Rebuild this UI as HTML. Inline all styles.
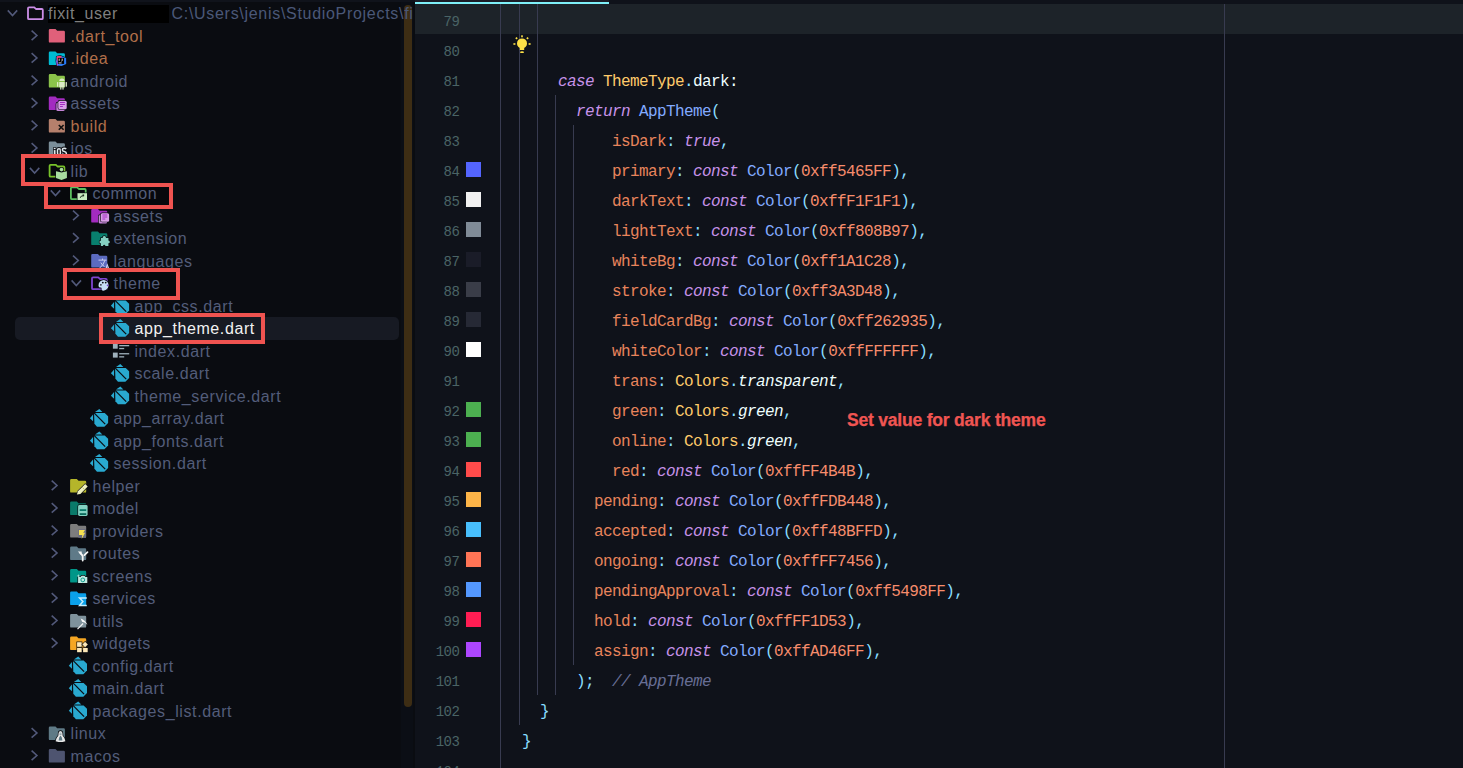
<!DOCTYPE html>
<html><head><meta charset="utf-8"><style>
*{margin:0;padding:0;box-sizing:border-box}
html,body{width:1463px;height:768px;overflow:hidden;background:#0f121a}
#side{position:absolute;left:0;top:0;width:415px;height:768px;background:#0a0c11;overflow:hidden}
#side:before{content:"";position:absolute;left:0;top:0;width:415px;height:2px;background:#10131b;z-index:6}
#topstrip{position:absolute;left:0;top:0;width:1463px;height:2px;background:#10131b}
.t{position:absolute;font-family:"Liberation Sans",sans-serif;font-size:16px;line-height:20px;letter-spacing:0.6px;white-space:nowrap}
.chev,.ic{position:absolute}
.sel{position:absolute;left:15px;width:384px;height:23px;background:#171a23;border-radius:5px}
.rb{position:absolute;border:4px solid #ef5350}
#sb{position:absolute;left:404px;top:5px;width:8px;height:702px;background:#3d2d14;border-radius:4px}
#ed{position:absolute;left:415px;top:0;width:1048px;height:768px;background:#0f121a;overflow:hidden}
.g{position:absolute;width:1px;background:#383b50}
.ln{position:absolute;left:0;width:44.2px;text-align:right;font-family:"Liberation Mono",monospace;font-size:14px;letter-spacing:-0.6px;line-height:30px;color:#4a6466;padding-top:3px}
.sw{position:absolute;left:51px;width:15px;height:15px}
.cl{position:absolute;font-family:"Liberation Mono",monospace;font-size:16px;letter-spacing:-0.6px;line-height:30px;white-space:pre;color:#eeffff;padding-top:3px}
.note{position:absolute;left:432px;top:409px;font-family:"Liberation Sans",sans-serif;font-weight:bold;font-size:17.5px;letter-spacing:-0.2px;line-height:22px;color:#f05552;white-space:nowrap;-webkit-text-stroke:0.25px #f05552}
</style></head><body>
<div id="side">
<div style="position:absolute;left:67px;top:272px;width:109px;height:24px;background:#07080c"></div>
<div style="position:absolute;left:48px;top:187px;width:121px;height:17.5px;background:#07080c"></div>
<div style="position:absolute;left:25px;top:158px;width:77px;height:24px;background:#07080c"></div>
<svg class="chev" style="left:6px;top:8px" width="14" height="11" viewBox="0 0 14 11"><path transform="translate(0.00,0.60)" d="M1.8 1.8 L6.5 6.9 L11.2 1.8" fill="none" stroke="#52597a" stroke-width="1.6"/></svg>
<svg class="ic" style="left:25px;top:3px" width="23" height="21" viewBox="0 0 23 21"><g transform="translate(0.00,0.60)"><path d="M3 4.7 Q3 3.7 4 3.7 H9.3 L10.9 5.4 H16.8 Q17.8 5.4 17.8 6.4 V14.6 Q17.8 15.6 16.8 15.6 H4 Q3 15.6 3 14.6 Z" fill="none" stroke="#cc8ee8" stroke-width="1.8" stroke-linejoin="round"/></g></svg>
<div style="position:absolute;left:48px;top:5px;width:121px;height:18px;background:#000"></div>
<div class="t" style="left:48px;top:4.1px;color:#7f7f7f">fixit_user</div>
<div class="t" style="left:171.5px;top:4.1px;color:#4a5878;width:241px;overflow:hidden;white-space:nowrap;z-index:5;letter-spacing:0.7px">C:\Users\jenis\StudioProjects\fixit_user</div>
<svg class="chev" style="left:30px;top:30px" width="10" height="13" viewBox="0 0 10 13"><path transform="translate(0.60,0.10)" d="M1.0 0.6 L6.3 5.4 L1.0 10.1" fill="none" stroke="#52597a" stroke-width="1.6"/></svg>
<svg class="ic" style="left:46px;top:26px" width="23" height="21" viewBox="0 0 23 21"><g transform="translate(0.60,0.10)"><path d="M2.2 4.2 Q2.2 3.0 3.4 3.0 H8.9 L10.6 4.7 H17.1 Q18.3 4.7 18.3 5.9 V15.3 Q18.3 16.5 17.1 16.5 H3.4 Q2.2 16.5 2.2 15.3 Z" fill="#e0607a"/></g></svg>
<div class="t" style="left:70.5px;top:26.6px;color:#b06f4a">.dart_tool</div>
<svg class="chev" style="left:30px;top:52px" width="10" height="13" viewBox="0 0 10 13"><path transform="translate(0.60,0.60)" d="M1.0 0.6 L6.3 5.4 L1.0 10.1" fill="none" stroke="#52597a" stroke-width="1.6"/></svg>
<svg class="ic" style="left:46px;top:48px" width="23" height="21" viewBox="0 0 23 21"><g transform="translate(0.60,0.60)"><path d="M2.2 4.2 Q2.2 3.0 3.4 3.0 H8.9 L10.6 4.7 H17.1 Q18.3 4.7 18.3 5.9 V15.3 Q18.3 16.5 17.1 16.5 H3.4 Q2.2 16.5 2.2 15.3 Z" fill="#00bcd4"/><path d="M10 8 L13.5 7.2 L19.5 9.5 L19.6 15.5 L15 17.3 L10.3 16.8 L9.6 12 Z" fill="#2a7bf5" stroke="#0a0c11" stroke-width="1.3" paint-order="stroke"/><path d="M10 8 L13.5 7.2 L15.5 8.5 L10.6 12.5 Z" fill="#ff3a6a"/><path d="M9.6 12 L10.6 12.5 L11.5 16.9 L10.3 16.8 Z" fill="#c04ad0"/><rect x="11.3" y="9.3" width="6.2" height="6" fill="#000"/><path d="M12.6 10 V12.3 M15.6 10 V12 Q15.6 12.6 14.8 12.6 M12 14.3 H15" stroke="#fff" stroke-width="0.8" fill="none"/></g></svg>
<div class="t" style="left:70.5px;top:49.1px;color:#b06f4a">.idea</div>
<svg class="chev" style="left:30px;top:75px" width="10" height="13" viewBox="0 0 10 13"><path transform="translate(0.60,0.10)" d="M1.0 0.6 L6.3 5.4 L1.0 10.1" fill="none" stroke="#52597a" stroke-width="1.6"/></svg>
<svg class="ic" style="left:46px;top:71px" width="23" height="21" viewBox="0 0 23 21"><g transform="translate(0.60,0.10)"><path d="M2.2 4.2 Q2.2 3.0 3.4 3.0 H8.9 L10.6 4.7 H17.1 Q18.3 4.7 18.3 5.9 V15.3 Q18.3 16.5 17.1 16.5 H3.4 Q2.2 16.5 2.2 15.3 Z" fill="#8bc34a"/><path d="M12.6 10 Q12.6 7.4 15.3 7.4 Q18 7.4 18 10 Z" fill="#dcebc8"/><rect x="12.6" y="10.9" width="5.4" height="5.2" fill="#dcebc8"/><rect x="10.4" y="11" width="1.3" height="4.6" fill="#dcebc8"/><rect x="19" y="11" width="1.3" height="4.6" fill="#dcebc8"/><rect x="13.6" y="16" width="1.2" height="2.5" fill="#dcebc8"/><rect x="15.8" y="16" width="1.2" height="2.5" fill="#dcebc8"/></g></svg>
<div class="t" style="left:70.5px;top:71.6px;color:#535d7a">android</div>
<svg class="chev" style="left:30px;top:97px" width="10" height="13" viewBox="0 0 10 13"><path transform="translate(0.60,0.60)" d="M1.0 0.6 L6.3 5.4 L1.0 10.1" fill="none" stroke="#52597a" stroke-width="1.6"/></svg>
<svg class="ic" style="left:46px;top:93px" width="23" height="21" viewBox="0 0 23 21"><g transform="translate(0.60,0.60)"><path d="M2.2 4.2 Q2.2 3.0 3.4 3.0 H8.9 L10.6 4.7 H17.1 Q18.3 4.7 18.3 5.9 V15.3 Q18.3 16.5 17.1 16.5 H3.4 Q2.2 16.5 2.2 15.3 Z" fill="#a22bc0"/><rect x="9.7" y="8.9" width="8.4" height="8.6" rx="1.5" fill="#c585d8" stroke="#0a0c11" stroke-width="1.3" paint-order="stroke"/><rect x="11.7" y="7.1" width="8.4" height="8.5" rx="1.5" fill="#d99ee8" stroke="#0a0c11" stroke-width="1.3" paint-order="stroke"/><path d="M13.4 8.9 H18.3 M13.4 10.9 H18.3 M13.4 12.9 H16.3" stroke="#a22bc0" stroke-width="1"/></g></svg>
<div class="t" style="left:70.5px;top:94.1px;color:#535d7a">assets</div>
<svg class="chev" style="left:30px;top:120px" width="10" height="13" viewBox="0 0 10 13"><path transform="translate(0.60,0.10)" d="M1.0 0.6 L6.3 5.4 L1.0 10.1" fill="none" stroke="#52597a" stroke-width="1.6"/></svg>
<svg class="ic" style="left:46px;top:116px" width="23" height="21" viewBox="0 0 23 21"><g transform="translate(0.60,0.10)"><path d="M2.2 4.2 Q2.2 3.0 3.4 3.0 H8.9 L10.6 4.7 H17.1 Q18.3 4.7 18.3 5.9 V15.3 Q18.3 16.5 17.1 16.5 H3.4 Q2.2 16.5 2.2 15.3 Z" fill="#b5806c"/><path d="M12.2 8.9 L17 13.7 M17 8.9 L12.2 13.7" stroke="#111" stroke-width="1.6"/></g></svg>
<div class="t" style="left:70.5px;top:116.6px;color:#b06f4a">build</div>
<svg class="chev" style="left:30px;top:142px" width="10" height="13" viewBox="0 0 10 13"><path transform="translate(0.60,0.60)" d="M1.0 0.6 L6.3 5.4 L1.0 10.1" fill="none" stroke="#52597a" stroke-width="1.6"/></svg>
<svg class="ic" style="left:46px;top:138px" width="23" height="21" viewBox="0 0 23 21"><g transform="translate(0.60,0.60)"><path d="M2.2 4.2 Q2.2 3.0 3.4 3.0 H8.9 L10.6 4.7 H17.1 Q18.3 4.7 18.3 5.9 V15.3 Q18.3 16.5 17.1 16.5 H3.4 Q2.2 16.5 2.2 15.3 Z" fill="#7b8e99"/><path d="M6.6 9 H21 V17 H6.6 Z" fill="#0a0c11" opacity="0"/><rect x="7.2" y="9.2" width="1.8" height="1.5" fill="#dfe6ea" stroke="#0a0c11" stroke-width="1.3" paint-order="stroke"/><rect x="7.2" y="11.5" width="1.8" height="5" fill="#dfe6ea" stroke="#0a0c11" stroke-width="1.3" paint-order="stroke"/><rect x="10.9" y="10.1" width="2.9" height="6" rx="1.4" fill="none" stroke="#0a0c11" stroke-width="3.2"/><rect x="10.9" y="10.1" width="2.9" height="6" rx="1.4" fill="none" stroke="#dfe6ea" stroke-width="1.5"/><path d="M19.6 10.3 Q19 9.6 17.6 9.6 Q15.8 9.6 15.8 11.3 Q15.8 12.6 17.8 13 Q19.8 13.4 19.8 14.8 Q19.8 16.6 17.6 16.6 Q16.2 16.6 15.6 15.8" fill="none" stroke="#0a0c11" stroke-width="3.2"/><path d="M19.6 10.3 Q19 9.6 17.6 9.6 Q15.8 9.6 15.8 11.3 Q15.8 12.6 17.8 13 Q19.8 13.4 19.8 14.8 Q19.8 16.6 17.6 16.6 Q16.2 16.6 15.6 15.8" fill="none" stroke="#dfe6ea" stroke-width="1.5"/></g></svg>
<div class="t" style="left:70.5px;top:139.1px;color:#535d7a">ios</div>
<svg class="chev" style="left:28px;top:166px" width="14" height="11" viewBox="0 0 14 11"><path transform="translate(0.10,0.10)" d="M1.8 1.8 L6.5 6.9 L11.2 1.8" fill="none" stroke="#52597a" stroke-width="1.6"/></svg>
<svg class="ic" style="left:46px;top:161px" width="23" height="21" viewBox="0 0 23 21"><g transform="translate(0.60,0.10)"><path d="M3 4.7 Q3 3.7 4 3.7 H9.3 L10.9 5.4 H16.8 Q17.8 5.4 17.8 6.4 V14.6 Q17.8 15.6 16.8 15.6 H4 Q3 15.6 3 14.6 Z" fill="none" stroke="#78c22a" stroke-width="1.8" stroke-linejoin="round"/><path d="M9.4 10.2 L14.9 11.4 L20.3 10.2 V17 L14.9 18.9 L9.4 17 Z" fill="#a8dca0" stroke="#0a0c11" stroke-width="1.3" paint-order="stroke"/><circle cx="14.9" cy="8.5" r="1.8" fill="#a8dca0" stroke="#0a0c11" stroke-width="1.3" paint-order="stroke"/></g></svg>
<div class="t" style="left:70.5px;top:161.6px;color:#535d7a">lib</div>
<svg class="chev" style="left:49px;top:188px" width="14" height="11" viewBox="0 0 14 11"><path transform="translate(0.00,0.60)" d="M1.8 1.8 L6.5 6.9 L11.2 1.8" fill="none" stroke="#52597a" stroke-width="1.6"/></svg>
<svg class="ic" style="left:67px;top:183px" width="23" height="21" viewBox="0 0 23 21"><g transform="translate(0.90,0.60)"><path d="M3 4.7 Q3 3.7 4 3.7 H9.3 L10.9 5.4 H16.8 Q17.8 5.4 17.8 6.4 V14.6 Q17.8 15.6 16.8 15.6 H4 Q3 15.6 3 14.6 Z" fill="none" stroke="#5cc060" stroke-width="1.8" stroke-linejoin="round"/><rect x="9.6" y="9.6" width="9.5" height="6.8" fill="#c8ecc0" stroke="#0a0c11" stroke-width="1.3" paint-order="stroke"/><path d="M12.3 14.2 Q13 11.8 16 11.8 M14.8 10.8 L16.2 11.8 L14.8 12.9" stroke="#1b2a1b" stroke-width="1" fill="none"/></g></svg>
<div class="t" style="left:92.4px;top:184.1px;color:#535d7a">common</div>
<svg class="chev" style="left:72px;top:210px" width="10" height="13" viewBox="0 0 10 13"><path transform="translate(0.00,0.10)" d="M1.0 0.6 L6.3 5.4 L1.0 10.1" fill="none" stroke="#52597a" stroke-width="1.6"/></svg>
<svg class="ic" style="left:89px;top:206px" width="23" height="21" viewBox="0 0 23 21"><g transform="translate(0.00,0.10)"><path d="M2.2 4.2 Q2.2 3.0 3.4 3.0 H8.9 L10.6 4.7 H17.1 Q18.3 4.7 18.3 5.9 V15.3 Q18.3 16.5 17.1 16.5 H3.4 Q2.2 16.5 2.2 15.3 Z" fill="#a22bc0"/><rect x="9.7" y="8.9" width="8.4" height="8.6" rx="1.5" fill="#c585d8" stroke="#0a0c11" stroke-width="1.3" paint-order="stroke"/><rect x="11.7" y="7.1" width="8.4" height="8.5" rx="1.5" fill="#d99ee8" stroke="#0a0c11" stroke-width="1.3" paint-order="stroke"/><path d="M13.4 8.9 H18.3 M13.4 10.9 H18.3 M13.4 12.9 H16.3" stroke="#a22bc0" stroke-width="1"/></g></svg>
<div class="t" style="left:113.4px;top:206.6px;color:#535d7a">assets</div>
<svg class="chev" style="left:72px;top:232px" width="10" height="13" viewBox="0 0 10 13"><path transform="translate(0.00,0.60)" d="M1.0 0.6 L6.3 5.4 L1.0 10.1" fill="none" stroke="#52597a" stroke-width="1.6"/></svg>
<svg class="ic" style="left:89px;top:228px" width="23" height="21" viewBox="0 0 23 21"><g transform="translate(0.00,0.60)"><path d="M2.2 4.2 Q2.2 3.0 3.4 3.0 H8.9 L10.6 4.7 H17.1 Q18.3 4.7 18.3 5.9 V15.3 Q18.3 16.5 17.1 16.5 H3.4 Q2.2 16.5 2.2 15.3 Z" fill="#087f6e"/><path d="M12 9.3 H13.6 Q13.6 7.3 15.3 7.3 Q17 7.3 17 9.3 H19.4 V12 Q20.8 12.2 20.8 13.3 Q20.8 14.4 19.4 14.6 V17.5 H16.4 Q16.3 16.2 15.2 16.2 Q14.1 16.2 14 17.5 H11.9 V14.6 Q10.4 14.6 10.4 13.4 Q10.4 12.2 11.9 12.1 Z" fill="#85d0c2" stroke="#0a0c11" stroke-width="1.3" paint-order="stroke"/></g></svg>
<div class="t" style="left:113.4px;top:229.1px;color:#535d7a">extension</div>
<svg class="chev" style="left:72px;top:255px" width="10" height="13" viewBox="0 0 10 13"><path transform="translate(0.00,0.10)" d="M1.0 0.6 L6.3 5.4 L1.0 10.1" fill="none" stroke="#52597a" stroke-width="1.6"/></svg>
<svg class="ic" style="left:89px;top:251px" width="23" height="21" viewBox="0 0 23 21"><g transform="translate(0.00,0.10)"><path d="M2.2 4.2 Q2.2 3.0 3.4 3.0 H8.9 L10.6 4.7 H17.1 Q18.3 4.7 18.3 5.9 V15.3 Q18.3 16.5 17.1 16.5 H3.4 Q2.2 16.5 2.2 15.3 Z" fill="#5c6bc0"/><path d="M9.5 9 H17.6 M13.5 7.5 V9 M16 9 Q14.5 14 10.6 17 M11.8 11.5 Q13.5 14.5 15.5 15.5" stroke="#c9cdf0" stroke-width="1" fill="none"/><path d="M16.5 18.5 L18.3 13.8 L20.1 18.5 M17.1 17 H19.5" stroke="#c9cdf0" stroke-width="1.1" fill="none"/></g></svg>
<div class="t" style="left:113.4px;top:251.6px;color:#535d7a">languages</div>
<svg class="chev" style="left:69px;top:278px" width="14" height="11" viewBox="0 0 14 11"><path transform="translate(0.80,0.60)" d="M1.8 1.8 L6.5 6.9 L11.2 1.8" fill="none" stroke="#52597a" stroke-width="1.6"/></svg>
<svg class="ic" style="left:89px;top:273px" width="23" height="21" viewBox="0 0 23 21"><g transform="translate(0.00,0.60)"><path d="M3 4.7 Q3 3.7 4 3.7 H9.3 L10.9 5.4 H16.8 Q17.8 5.4 17.8 6.4 V14.6 Q17.8 15.6 16.8 15.6 H4 Q3 15.6 3 14.6 Z" fill="none" stroke="#7e45d0" stroke-width="1.8" stroke-linejoin="round"/><path d="M14.9 6.3 A5.4 5.4 0 1 1 13.4 17 Q11.8 16.2 12.6 15 Q13 14 11.5 14 Q9.5 14 9.5 11.8 A5.4 5.4 0 0 1 14.9 6.3 Z" fill="#c8e0f6" stroke="#0a0c11" stroke-width="1.3" paint-order="stroke"/><circle cx="13.8" cy="9" r="0.9" fill="#111"/><circle cx="16.7" cy="9" r="0.9" fill="#111"/><circle cx="11.9" cy="11.2" r="0.9" fill="#333"/><circle cx="18.6" cy="11.7" r="0.9" fill="#7e45d0"/></g></svg>
<div class="t" style="left:113.4px;top:274.1px;color:#535d7a">theme</div>
<svg class="ic" style="left:110px;top:296px" width="23" height="21" viewBox="0 0 23 21"><g transform="translate(0.00,0.10)"><path d="M10.34 0.3 L13.4 3.3 H6.0 Z" fill="#29a9d0"/><path d="M5.1 4.3 H15.7 L19.1 7.7 V14.5 L15.4 18.1 H8 L5.4 15.2 Z" fill="#29a9d0"/><path d="M4.8 4.0 L16.2 15.5" stroke="#0a0c11" stroke-width="1.25"/><path d="M0.9 9.7 L4.05 5.8 V12.6 Z" fill="#29a9d0"/></g></svg>
<div class="t" style="left:134.4px;top:296.6px;color:#535d7a">app_css.dart</div>
<div class="sel" style="top:316.5px"></div>
<svg class="ic" style="left:110px;top:318px" width="23" height="21" viewBox="0 0 23 21"><g transform="translate(0.00,0.60)"><path d="M10.34 0.3 L13.4 3.3 H6.0 Z" fill="#29a9d0"/><path d="M5.1 4.3 H15.7 L19.1 7.7 V14.5 L15.4 18.1 H8 L5.4 15.2 Z" fill="#29a9d0"/><path d="M4.8 4.0 L16.2 15.5" stroke="#0a0c11" stroke-width="1.25"/><path d="M0.9 9.7 L4.05 5.8 V12.6 Z" fill="#29a9d0"/></g></svg>
<div class="t" style="left:134.4px;top:319.1px;color:#f2f2f2">app_theme.dart</div>
<svg class="ic" style="left:110px;top:341px" width="23" height="21" viewBox="0 0 23 21"><g transform="translate(0.00,0.10)"><rect x="2.9" y="2.4" width="4.8" height="5.2" fill="#9eb0bb"/><rect x="2.9" y="11.5" width="4.8" height="5" fill="#9eb0bb"/><rect x="9.2" y="3.9" width="10" height="1.3" fill="#9eb0bb"/><rect x="9.2" y="6.8" width="5" height="1.3" fill="#9eb0bb"/><rect x="9.2" y="12" width="10" height="1.3" fill="#9eb0bb"/><rect x="9.2" y="15.1" width="5" height="1.3" fill="#9eb0bb"/></g></svg>
<div class="t" style="left:134.4px;top:341.6px;color:#535d7a">index.dart</div>
<svg class="ic" style="left:110px;top:363px" width="23" height="21" viewBox="0 0 23 21"><g transform="translate(0.00,0.60)"><path d="M10.34 0.3 L13.4 3.3 H6.0 Z" fill="#29a9d0"/><path d="M5.1 4.3 H15.7 L19.1 7.7 V14.5 L15.4 18.1 H8 L5.4 15.2 Z" fill="#29a9d0"/><path d="M4.8 4.0 L16.2 15.5" stroke="#0a0c11" stroke-width="1.25"/><path d="M0.9 9.7 L4.05 5.8 V12.6 Z" fill="#29a9d0"/></g></svg>
<div class="t" style="left:134.4px;top:364.1px;color:#535d7a">scale.dart</div>
<svg class="ic" style="left:110px;top:386px" width="23" height="21" viewBox="0 0 23 21"><g transform="translate(0.00,0.10)"><path d="M10.34 0.3 L13.4 3.3 H6.0 Z" fill="#29a9d0"/><path d="M5.1 4.3 H15.7 L19.1 7.7 V14.5 L15.4 18.1 H8 L5.4 15.2 Z" fill="#29a9d0"/><path d="M4.8 4.0 L16.2 15.5" stroke="#0a0c11" stroke-width="1.25"/><path d="M0.9 9.7 L4.05 5.8 V12.6 Z" fill="#29a9d0"/></g></svg>
<div class="t" style="left:134.4px;top:386.6px;color:#535d7a">theme_service.dart</div>
<svg class="ic" style="left:89px;top:408px" width="23" height="21" viewBox="0 0 23 21"><g transform="translate(0.00,0.60)"><path d="M10.34 0.3 L13.4 3.3 H6.0 Z" fill="#29a9d0"/><path d="M5.1 4.3 H15.7 L19.1 7.7 V14.5 L15.4 18.1 H8 L5.4 15.2 Z" fill="#29a9d0"/><path d="M4.8 4.0 L16.2 15.5" stroke="#0a0c11" stroke-width="1.25"/><path d="M0.9 9.7 L4.05 5.8 V12.6 Z" fill="#29a9d0"/></g></svg>
<div class="t" style="left:113.4px;top:409.1px;color:#535d7a">app_array.dart</div>
<svg class="ic" style="left:89px;top:431px" width="23" height="21" viewBox="0 0 23 21"><g transform="translate(0.00,0.10)"><path d="M10.34 0.3 L13.4 3.3 H6.0 Z" fill="#29a9d0"/><path d="M5.1 4.3 H15.7 L19.1 7.7 V14.5 L15.4 18.1 H8 L5.4 15.2 Z" fill="#29a9d0"/><path d="M4.8 4.0 L16.2 15.5" stroke="#0a0c11" stroke-width="1.25"/><path d="M0.9 9.7 L4.05 5.8 V12.6 Z" fill="#29a9d0"/></g></svg>
<div class="t" style="left:113.4px;top:431.6px;color:#535d7a">app_fonts.dart</div>
<svg class="ic" style="left:89px;top:453px" width="23" height="21" viewBox="0 0 23 21"><g transform="translate(0.00,0.60)"><path d="M10.34 0.3 L13.4 3.3 H6.0 Z" fill="#29a9d0"/><path d="M5.1 4.3 H15.7 L19.1 7.7 V14.5 L15.4 18.1 H8 L5.4 15.2 Z" fill="#29a9d0"/><path d="M4.8 4.0 L16.2 15.5" stroke="#0a0c11" stroke-width="1.25"/><path d="M0.9 9.7 L4.05 5.8 V12.6 Z" fill="#29a9d0"/></g></svg>
<div class="t" style="left:113.4px;top:454.1px;color:#535d7a">session.dart</div>
<svg class="chev" style="left:50px;top:480px" width="10" height="13" viewBox="0 0 10 13"><path transform="translate(0.70,0.10)" d="M1.0 0.6 L6.3 5.4 L1.0 10.1" fill="none" stroke="#52597a" stroke-width="1.6"/></svg>
<svg class="ic" style="left:67px;top:476px" width="23" height="21" viewBox="0 0 23 21"><g transform="translate(0.90,0.10)"><path d="M2.2 4.2 Q2.2 3.0 3.4 3.0 H8.9 L10.6 4.7 H17.1 Q18.3 4.7 18.3 5.9 V15.3 Q18.3 16.5 17.1 16.5 H3.4 Q2.2 16.5 2.2 15.3 Z" fill="#b5b52a"/><path d="M9 18.5 L10 15.2 L17.3 8 L19.8 10.5 L12.5 17.8 Z" fill="#eef0c0" stroke="#0a0c11" stroke-width="1.3" paint-order="stroke"/><path d="M14.6 11.4 L16.3 13.1" stroke="#b5b52a" stroke-width="0.6"/></g></svg>
<div class="t" style="left:92.4px;top:476.6px;color:#535d7a">helper</div>
<svg class="chev" style="left:50px;top:502px" width="10" height="13" viewBox="0 0 10 13"><path transform="translate(0.70,0.60)" d="M1.0 0.6 L6.3 5.4 L1.0 10.1" fill="none" stroke="#52597a" stroke-width="1.6"/></svg>
<svg class="ic" style="left:67px;top:498px" width="23" height="21" viewBox="0 0 23 21"><g transform="translate(0.90,0.60)"><path d="M2.2 4.2 Q2.2 3.0 3.4 3.0 H8.9 L10.6 4.7 H17.1 Q18.3 4.7 18.3 5.9 V15.3 Q18.3 16.5 17.1 16.5 H3.4 Q2.2 16.5 2.2 15.3 Z" fill="#0a7a6a"/><rect x="10.2" y="6.4" width="9.5" height="11" rx="1.4" fill="#84d2c3" stroke="#0a0c11" stroke-width="1.3" paint-order="stroke"/><rect x="11.8" y="10.6" width="6.5" height="1.8" fill="#0a7a6a"/><rect x="11.8" y="14.6" width="6.5" height="1.8" fill="#0a6a5c"/></g></svg>
<div class="t" style="left:92.4px;top:499.1px;color:#535d7a">model</div>
<svg class="chev" style="left:50px;top:525px" width="10" height="13" viewBox="0 0 10 13"><path transform="translate(0.70,0.10)" d="M1.0 0.6 L6.3 5.4 L1.0 10.1" fill="none" stroke="#52597a" stroke-width="1.6"/></svg>
<svg class="ic" style="left:67px;top:521px" width="23" height="21" viewBox="0 0 23 21"><g transform="translate(0.90,0.10)"><path d="M2.2 4.2 Q2.2 3.0 3.4 3.0 H8.9 L10.6 4.7 H17.1 Q18.3 4.7 18.3 5.9 V15.3 Q18.3 16.5 17.1 16.5 H3.4 Q2.2 16.5 2.2 15.3 Z" fill="#7d7d7d"/><rect x="10.5" y="8.2" width="7.6" height="8.5" fill="#6a6d80"/><path d="M11.1 8.8 H17.1 L15.3 11.6 H17.2 L13.8 18 L14.4 13.8 H11.1 Z" fill="#f5e050"/></g></svg>
<div class="t" style="left:92.4px;top:521.6px;color:#535d7a">providers</div>
<svg class="chev" style="left:50px;top:547px" width="10" height="13" viewBox="0 0 10 13"><path transform="translate(0.70,0.60)" d="M1.0 0.6 L6.3 5.4 L1.0 10.1" fill="none" stroke="#52597a" stroke-width="1.6"/></svg>
<svg class="ic" style="left:67px;top:543px" width="23" height="21" viewBox="0 0 23 21"><g transform="translate(0.90,0.60)"><path d="M2.2 4.2 Q2.2 3.0 3.4 3.0 H8.9 L10.6 4.7 H17.1 Q18.3 4.7 18.3 5.9 V15.3 Q18.3 16.5 17.1 16.5 H3.4 Q2.2 16.5 2.2 15.3 Z" fill="#5f7a88"/><path d="M14.8 17 V13 Q14.8 11.5 12.5 9.6" stroke="#f4f4f4" stroke-width="1.8" fill="none" stroke-linecap="round"/><path d="M9.9 8 H13.8 V11.9 Z" fill="#f4f4f4"/><path d="M16.5 11.5 L19.6 8.6" stroke="#f4f4f4" stroke-width="1.8" stroke-linecap="round"/></g></svg>
<div class="t" style="left:92.4px;top:544.1px;color:#535d7a">routes</div>
<svg class="chev" style="left:50px;top:570px" width="10" height="13" viewBox="0 0 10 13"><path transform="translate(0.70,0.10)" d="M1.0 0.6 L6.3 5.4 L1.0 10.1" fill="none" stroke="#52597a" stroke-width="1.6"/></svg>
<svg class="ic" style="left:67px;top:566px" width="23" height="21" viewBox="0 0 23 21"><g transform="translate(0.90,0.10)"><path d="M2.2 4.2 Q2.2 3.0 3.4 3.0 H8.9 L10.6 4.7 H17.1 Q18.3 4.7 18.3 5.9 V15.3 Q18.3 16.5 17.1 16.5 H3.4 Q2.2 16.5 2.2 15.3 Z" fill="#009688"/><path d="M10.2 10.9 H12.6 L13.7 9.6 H16.5 L17.6 10.9 H19.4 V17 H10.2 Z" fill="#bfe8e0" stroke="#0a0c11" stroke-width="1.3" paint-order="stroke"/><circle cx="14.9" cy="13.8" r="1.9" fill="none" stroke="#009688" stroke-width="0.9"/><path d="M10.5 8 L11 9.4 L12.3 9.9 L11 10.4 L10.5 11.8 L10 10.4 L8.7 9.9 L10 9.4 Z" fill="#a8e0d6"/></g></svg>
<div class="t" style="left:92.4px;top:566.6px;color:#535d7a">screens</div>
<svg class="chev" style="left:50px;top:592px" width="10" height="13" viewBox="0 0 10 13"><path transform="translate(0.70,0.60)" d="M1.0 0.6 L6.3 5.4 L1.0 10.1" fill="none" stroke="#52597a" stroke-width="1.6"/></svg>
<svg class="ic" style="left:67px;top:588px" width="23" height="21" viewBox="0 0 23 21"><g transform="translate(0.90,0.60)"><path d="M2.2 4.2 Q2.2 3.0 3.4 3.0 H8.9 L10.6 4.7 H17.1 Q18.3 4.7 18.3 5.9 V15.3 Q18.3 16.5 17.1 16.5 H3.4 Q2.2 16.5 2.2 15.3 Z" fill="#0aa0ea"/><path d="M18.9 9.4 H11.7 L15 12.9 L11.7 16.9 H18.9" stroke="#c4eeff" stroke-width="1.5" fill="none" stroke="#0a0c11" stroke-width="1.3" paint-order="stroke"/></g></svg>
<div class="t" style="left:92.4px;top:589.1px;color:#535d7a">services</div>
<svg class="chev" style="left:50px;top:615px" width="10" height="13" viewBox="0 0 10 13"><path transform="translate(0.70,0.10)" d="M1.0 0.6 L6.3 5.4 L1.0 10.1" fill="none" stroke="#52597a" stroke-width="1.6"/></svg>
<svg class="ic" style="left:67px;top:611px" width="23" height="21" viewBox="0 0 23 21"><g transform="translate(0.90,0.10)"><path d="M2.2 4.2 Q2.2 3.0 3.4 3.0 H8.9 L10.6 4.7 H17.1 Q18.3 4.7 18.3 5.9 V15.3 Q18.3 16.5 17.1 16.5 H3.4 Q2.2 16.5 2.2 15.3 Z" fill="#7f929c"/><path d="M9.6 18 L15.2 12.4" stroke="#f4f4f4" stroke-width="1.2"/><path d="M12.8 7.3 Q17.5 9 19.6 13.8 Q17.5 11 14.2 10.6 Z" fill="#fafafa"/></g></svg>
<div class="t" style="left:92.4px;top:611.6px;color:#535d7a">utils</div>
<svg class="chev" style="left:50px;top:637px" width="10" height="13" viewBox="0 0 10 13"><path transform="translate(0.70,0.60)" d="M1.0 0.6 L6.3 5.4 L1.0 10.1" fill="none" stroke="#52597a" stroke-width="1.6"/></svg>
<svg class="ic" style="left:67px;top:633px" width="23" height="21" viewBox="0 0 23 21"><g transform="translate(0.90,0.60)"><path d="M2.2 4.2 Q2.2 3.0 3.4 3.0 H8.9 L10.6 4.7 H17.1 Q18.3 4.7 18.3 5.9 V15.3 Q18.3 16.5 17.1 16.5 H3.4 Q2.2 16.5 2.2 15.3 Z" fill="#f5a623"/><rect x="9.2" y="8.6" width="4.6" height="4.6" fill="#fde8b8" stroke="#0a0c11" stroke-width="1.3" paint-order="stroke"/><rect x="9.2" y="14.4" width="4.6" height="4.2" fill="#fde8b8" stroke="#0a0c11" stroke-width="1.3" paint-order="stroke"/><rect x="15.2" y="14.4" width="4.6" height="4.2" fill="#fde8b8" stroke="#0a0c11" stroke-width="1.3" paint-order="stroke"/><path d="M17.2 8.2 L19.9 10.9 L17.2 13.6 L14.5 10.9 Z" fill="#fde8b8" stroke="#0a0c11" stroke-width="1.3" paint-order="stroke"/></g></svg>
<div class="t" style="left:92.4px;top:634.1px;color:#535d7a">widgets</div>
<svg class="ic" style="left:67px;top:656px" width="23" height="21" viewBox="0 0 23 21"><g transform="translate(0.90,0.10)"><path d="M10.34 0.3 L13.4 3.3 H6.0 Z" fill="#29a9d0"/><path d="M5.1 4.3 H15.7 L19.1 7.7 V14.5 L15.4 18.1 H8 L5.4 15.2 Z" fill="#29a9d0"/><path d="M4.8 4.0 L16.2 15.5" stroke="#0a0c11" stroke-width="1.25"/><path d="M0.9 9.7 L4.05 5.8 V12.6 Z" fill="#29a9d0"/></g></svg>
<div class="t" style="left:92.4px;top:656.6px;color:#535d7a">config.dart</div>
<svg class="ic" style="left:67px;top:678px" width="23" height="21" viewBox="0 0 23 21"><g transform="translate(0.90,0.60)"><path d="M10.34 0.3 L13.4 3.3 H6.0 Z" fill="#29a9d0"/><path d="M5.1 4.3 H15.7 L19.1 7.7 V14.5 L15.4 18.1 H8 L5.4 15.2 Z" fill="#29a9d0"/><path d="M4.8 4.0 L16.2 15.5" stroke="#0a0c11" stroke-width="1.25"/><path d="M0.9 9.7 L4.05 5.8 V12.6 Z" fill="#29a9d0"/></g></svg>
<div class="t" style="left:92.4px;top:679.1px;color:#535d7a">main.dart</div>
<svg class="ic" style="left:67px;top:701px" width="23" height="21" viewBox="0 0 23 21"><g transform="translate(0.90,0.10)"><path d="M10.34 0.3 L13.4 3.3 H6.0 Z" fill="#29a9d0"/><path d="M5.1 4.3 H15.7 L19.1 7.7 V14.5 L15.4 18.1 H8 L5.4 15.2 Z" fill="#29a9d0"/><path d="M4.8 4.0 L16.2 15.5" stroke="#0a0c11" stroke-width="1.25"/><path d="M0.9 9.7 L4.05 5.8 V12.6 Z" fill="#29a9d0"/></g></svg>
<div class="t" style="left:92.4px;top:701.6px;color:#535d7a">packages_list.dart</div>
<svg class="chev" style="left:30px;top:727px" width="10" height="13" viewBox="0 0 10 13"><path transform="translate(0.60,0.60)" d="M1.0 0.6 L6.3 5.4 L1.0 10.1" fill="none" stroke="#52597a" stroke-width="1.6"/></svg>
<svg class="ic" style="left:46px;top:723px" width="23" height="21" viewBox="0 0 23 21"><g transform="translate(0.60,0.60)"><path d="M2.2 4.2 Q2.2 3.0 3.4 3.0 H8.9 L10.6 4.7 H17.1 Q18.3 4.7 18.3 5.9 V15.3 Q18.3 16.5 17.1 16.5 H3.4 Q2.2 16.5 2.2 15.3 Z" fill="#5f7a86"/><path d="M13.9 7.4 Q15.9 7.4 15.9 10 L16 11.8 Q18.6 14.5 18.8 17.6 L16 18.4 L11.8 18.4 L9 17.6 Q9.2 14.5 11.8 11.8 L11.9 10 Q11.9 7.4 13.9 7.4 Z" fill="#e8e8e8" stroke="#0a0c11" stroke-width="1.3" paint-order="stroke"/><path d="M12.9 9.6 H14.9 M12.9 10.9 H14.9" stroke="#5f7a86" stroke-width="0.6"/><path d="M13.9 12 Q15.6 13.5 15.8 16.8 H12 Q12.2 13.5 13.9 12 Z" fill="#5f7a86"/></g></svg>
<div class="t" style="left:70.5px;top:724.1px;color:#535d7a">linux</div>
<svg class="chev" style="left:30px;top:750px" width="10" height="13" viewBox="0 0 10 13"><path transform="translate(0.60,0.10)" d="M1.0 0.6 L6.3 5.4 L1.0 10.1" fill="none" stroke="#52597a" stroke-width="1.6"/></svg>
<svg class="ic" style="left:46px;top:746px" width="23" height="21" viewBox="0 0 23 21"><g transform="translate(0.60,0.10)"><path d="M2.2 4.2 Q2.2 3.0 3.4 3.0 H8.9 L10.6 4.7 H17.1 Q18.3 4.7 18.3 5.9 V15.3 Q18.3 16.5 17.1 16.5 H3.4 Q2.2 16.5 2.2 15.3 Z" fill="#4e5470"/></g></svg>
<div class="t" style="left:70.5px;top:746.6px;color:#535d7a">macos</div>
<div class="rb" style="left:21px;top:154px;width:85px;height:32px"></div>
<div class="rb" style="left:44px;top:183px;width:129px;height:25.5px"></div>
<div class="rb" style="left:63px;top:268px;width:117px;height:32px"></div>
<div class="rb" style="left:99px;top:313px;width:166px;height:31px"></div>
<div style="position:absolute;left:401px;top:0;width:12px;height:768px;background:#0b0e15"></div><div id="sb"></div>
</div>
<div id="ed">
<div style="position:absolute;left:0px;top:4px;width:1048px;height:30px;background:#1d2329"></div>
<div style="position:absolute;left:0px;top:0px;width:194px;height:2px;background:#1c1d27"></div>
<div style="position:absolute;left:0px;top:2px;width:194px;height:2px;background:#7ff0f8"></div>
<div class="g" style="left:809px;top:4px;height:764px"></div>
<div class="g" style="left:85.05px;top:4px;height:764px"></div>
<div class="g" style="left:103.5px;top:4px;height:721px"></div>
<div class="g" style="left:121.5px;top:4px;height:691px"></div>
<div class="g" style="left:139.5px;top:95px;height:600px"></div>
<div class="g" style="left:157.5px;top:125px;height:540px"></div>
<div class="ln" style="top:4px">79</div>
<div class="ln" style="top:34px">80</div>
<div class="ln" style="top:64px">81</div>
<div class="cl" style="top:64px;left:143px"><span style="color:#c792ea;font-style:italic">case</span> <span style="color:#ffcb6b">ThemeType</span><span style="color:#89ddff">.</span><span style="color:#eeffff">dark</span><span style="color:#eeffff">:</span></div>
<div class="ln" style="top:94px">82</div>
<div class="cl" style="top:94px;left:161px"><span style="color:#c792ea;font-style:italic">return</span> <span style="color:#82aaff">AppTheme</span><span style="color:#89ddff">(</span></div>
<div class="ln" style="top:124px">83</div>
<div class="cl" style="top:124px;left:197px"><span style="color:#e8845c">isDark</span><span style="color:#89ddff">:</span> <span style="color:#c792ea;font-style:italic">true</span><span style="color:#89ddff">,</span></div>
<div class="ln" style="top:154px">84</div>
<div class="sw" style="top:162px;background:#5465FF"></div>
<div class="cl" style="top:154px;left:197px"><span style="color:#e8845c">primary</span><span style="color:#89ddff">:</span> <span style="color:#c792ea;font-style:italic">const</span> <span style="color:#82aaff">Color</span><span style="color:#89ddff">(</span><span style="color:#f78c6c">0xff5465FF</span><span style="color:#89ddff">)</span><span style="color:#89ddff">,</span></div>
<div class="ln" style="top:184px">85</div>
<div class="sw" style="top:192px;background:#F1F1F1"></div>
<div class="cl" style="top:184px;left:197px"><span style="color:#e8845c">darkText</span><span style="color:#89ddff">:</span> <span style="color:#c792ea;font-style:italic">const</span> <span style="color:#82aaff">Color</span><span style="color:#89ddff">(</span><span style="color:#f78c6c">0xffF1F1F1</span><span style="color:#89ddff">)</span><span style="color:#89ddff">,</span></div>
<div class="ln" style="top:214px">86</div>
<div class="sw" style="top:222px;background:#808B97"></div>
<div class="cl" style="top:214px;left:197px"><span style="color:#e8845c">lightText</span><span style="color:#89ddff">:</span> <span style="color:#c792ea;font-style:italic">const</span> <span style="color:#82aaff">Color</span><span style="color:#89ddff">(</span><span style="color:#f78c6c">0xff808B97</span><span style="color:#89ddff">)</span><span style="color:#89ddff">,</span></div>
<div class="ln" style="top:244px">87</div>
<div class="sw" style="top:252px;background:#1A1C28"></div>
<div class="cl" style="top:244px;left:197px"><span style="color:#e8845c">whiteBg</span><span style="color:#89ddff">:</span> <span style="color:#c792ea;font-style:italic">const</span> <span style="color:#82aaff">Color</span><span style="color:#89ddff">(</span><span style="color:#f78c6c">0xff1A1C28</span><span style="color:#89ddff">)</span><span style="color:#89ddff">,</span></div>
<div class="ln" style="top:274px">88</div>
<div class="sw" style="top:282px;background:#3A3D48"></div>
<div class="cl" style="top:274px;left:197px"><span style="color:#e8845c">stroke</span><span style="color:#89ddff">:</span> <span style="color:#c792ea;font-style:italic">const</span> <span style="color:#82aaff">Color</span><span style="color:#89ddff">(</span><span style="color:#f78c6c">0xff3A3D48</span><span style="color:#89ddff">)</span><span style="color:#89ddff">,</span></div>
<div class="ln" style="top:304px">89</div>
<div class="sw" style="top:312px;background:#262935"></div>
<div class="cl" style="top:304px;left:197px"><span style="color:#e8845c">fieldCardBg</span><span style="color:#89ddff">:</span> <span style="color:#c792ea;font-style:italic">const</span> <span style="color:#82aaff">Color</span><span style="color:#89ddff">(</span><span style="color:#f78c6c">0xff262935</span><span style="color:#89ddff">)</span><span style="color:#89ddff">,</span></div>
<div class="ln" style="top:334px">90</div>
<div class="sw" style="top:342px;background:#FFFFFF"></div>
<div class="cl" style="top:334px;left:197px"><span style="color:#e8845c">whiteColor</span><span style="color:#89ddff">:</span> <span style="color:#c792ea;font-style:italic">const</span> <span style="color:#82aaff">Color</span><span style="color:#89ddff">(</span><span style="color:#f78c6c">0xffFFFFFF</span><span style="color:#89ddff">)</span><span style="color:#89ddff">,</span></div>
<div class="ln" style="top:364px">91</div>
<div class="cl" style="top:364px;left:197px"><span style="color:#e8845c">trans</span><span style="color:#89ddff">:</span> <span style="color:#ffcb6b">Colors</span><span style="color:#89ddff">.</span><span style="color:#eeffff;font-style:italic">transparent</span><span style="color:#89ddff">,</span></div>
<div class="ln" style="top:394px">92</div>
<div class="sw" style="top:402px;background:#4CAF50"></div>
<div class="cl" style="top:394px;left:197px"><span style="color:#e8845c">green</span><span style="color:#89ddff">:</span> <span style="color:#ffcb6b">Colors</span><span style="color:#89ddff">.</span><span style="color:#eeffff;font-style:italic">green</span><span style="color:#89ddff">,</span></div>
<div class="ln" style="top:424px">93</div>
<div class="sw" style="top:432px;background:#4CAF50"></div>
<div class="cl" style="top:424px;left:197px"><span style="color:#e8845c">online</span><span style="color:#89ddff">:</span> <span style="color:#ffcb6b">Colors</span><span style="color:#89ddff">.</span><span style="color:#eeffff;font-style:italic">green</span><span style="color:#89ddff">,</span></div>
<div class="ln" style="top:454px">94</div>
<div class="sw" style="top:462px;background:#FF4B4B"></div>
<div class="cl" style="top:454px;left:197px"><span style="color:#e8845c">red</span><span style="color:#89ddff">:</span> <span style="color:#c792ea;font-style:italic">const</span> <span style="color:#82aaff">Color</span><span style="color:#89ddff">(</span><span style="color:#f78c6c">0xffFF4B4B</span><span style="color:#89ddff">)</span><span style="color:#89ddff">,</span></div>
<div class="ln" style="top:484px">95</div>
<div class="sw" style="top:492px;background:#FDB448"></div>
<div class="cl" style="top:484px;left:179px"><span style="color:#e8845c">pending</span><span style="color:#89ddff">:</span> <span style="color:#c792ea;font-style:italic">const</span> <span style="color:#82aaff">Color</span><span style="color:#89ddff">(</span><span style="color:#f78c6c">0xffFDB448</span><span style="color:#89ddff">)</span><span style="color:#89ddff">,</span></div>
<div class="ln" style="top:514px">96</div>
<div class="sw" style="top:522px;background:#48BFFD"></div>
<div class="cl" style="top:514px;left:179px"><span style="color:#e8845c">accepted</span><span style="color:#89ddff">:</span> <span style="color:#c792ea;font-style:italic">const</span> <span style="color:#82aaff">Color</span><span style="color:#89ddff">(</span><span style="color:#f78c6c">0xff48BFFD</span><span style="color:#89ddff">)</span><span style="color:#89ddff">,</span></div>
<div class="ln" style="top:544px">97</div>
<div class="sw" style="top:552px;background:#FF7456"></div>
<div class="cl" style="top:544px;left:179px"><span style="color:#e8845c">ongoing</span><span style="color:#89ddff">:</span> <span style="color:#c792ea;font-style:italic">const</span> <span style="color:#82aaff">Color</span><span style="color:#89ddff">(</span><span style="color:#f78c6c">0xffFF7456</span><span style="color:#89ddff">)</span><span style="color:#89ddff">,</span></div>
<div class="ln" style="top:574px">98</div>
<div class="sw" style="top:582px;background:#5498FF"></div>
<div class="cl" style="top:574px;left:179px"><span style="color:#e8845c">pendingApproval</span><span style="color:#89ddff">:</span> <span style="color:#c792ea;font-style:italic">const</span> <span style="color:#82aaff">Color</span><span style="color:#89ddff">(</span><span style="color:#f78c6c">0xff5498FF</span><span style="color:#89ddff">)</span><span style="color:#89ddff">,</span></div>
<div class="ln" style="top:604px">99</div>
<div class="sw" style="top:612px;background:#FF1D53"></div>
<div class="cl" style="top:604px;left:179px"><span style="color:#e8845c">hold</span><span style="color:#89ddff">:</span> <span style="color:#c792ea;font-style:italic">const</span> <span style="color:#82aaff">Color</span><span style="color:#89ddff">(</span><span style="color:#f78c6c">0xffFF1D53</span><span style="color:#89ddff">)</span><span style="color:#89ddff">,</span></div>
<div class="ln" style="top:634px">100</div>
<div class="sw" style="top:642px;background:#AD46FF"></div>
<div class="cl" style="top:634px;left:179px"><span style="color:#e8845c">assign</span><span style="color:#89ddff">:</span> <span style="color:#c792ea;font-style:italic">const</span> <span style="color:#82aaff">Color</span><span style="color:#89ddff">(</span><span style="color:#f78c6c">0xffAD46FF</span><span style="color:#89ddff">)</span><span style="color:#89ddff">,</span></div>
<div class="ln" style="top:664px">101</div>
<div class="cl" style="top:664px;left:161px"><span style="color:#89ddff">)</span><span style="color:#89ddff">;</span>  <span style="color:#676e95;font-style:italic">// AppTheme</span></div>
<div class="ln" style="top:694px">102</div>
<div class="cl" style="top:694px;left:125px"><span style="color:#89ddff">}</span></div>
<div class="ln" style="top:724px">103</div>
<div class="cl" style="top:724px;left:107px"><span style="color:#89ddff">}</span></div>
<div class="ln" style="top:754px">104</div>
<svg style="position:absolute;left:97px;top:34px" width="20" height="20" viewBox="0 0 20 20"><circle cx="10" cy="9.4" r="5" fill="#fde047"/><rect x="7.8" y="12" width="4.4" height="4" fill="#fde047"/><ellipse cx="10" cy="18.2" rx="2" ry="0.9" fill="#fde047"/><rect x="9.2" y="1.3" width="1.6" height="2" fill="#fde047"/><rect x="1.4" y="9.2" width="2" height="1.6" fill="#fde047"/><rect x="16.6" y="9.2" width="2" height="1.6" fill="#fde047"/><rect x="3.6" y="3.4" width="1.8" height="1.8" transform="rotate(45 4.5 4.3)" fill="#fde047"/><rect x="14.6" y="3.4" width="1.8" height="1.8" transform="rotate(45 15.5 4.3)" fill="#fde047"/></svg>
<div class="note">Set value for dark theme</div>
</div>

</body></html>
